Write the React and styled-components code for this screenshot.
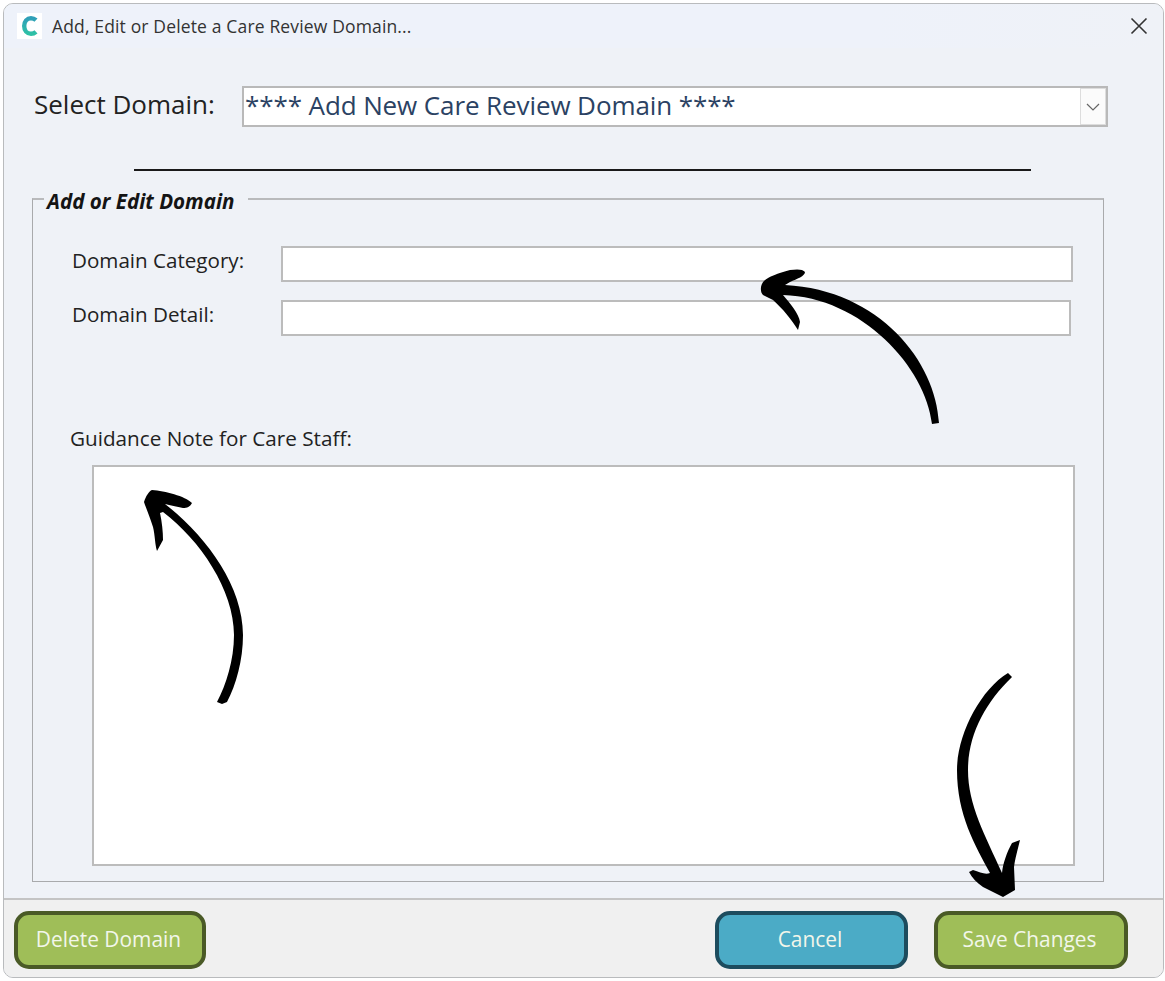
import React from 'react'
import styled, { createGlobalStyle } from 'styled-components'

const GlobalStyle = createGlobalStyle`
  html, body {
    margin: 0;
    padding: 0;
    background: #ffffff;
    font-family: "Open Sans", "Noto Sans", sans-serif;
  }
`

const Page = styled.div`
  position: relative;
  width: 1165px;
  height: 981px;
  padding: 3px 0 0 3px;
  box-sizing: border-box;
  overflow: hidden;
`

const Window = styled.div`
  width: 1161px;
  height: 975px;
  box-sizing: border-box;
  display: flex;
  flex-direction: column;
  background: #eff2f7;
  border: 1px solid #b9bbbd;
  border-radius: 10px;
  overflow: hidden;
`

const TitleBar = styled.div`
  flex: none;
  height: 44px;
  display: flex;
  align-items: center;
  padding: 0 14px 0 13px;
  color: #333;
  font-size: 17.5px;
  background: linear-gradient(90deg, #eef2fa 0%, #eef2fa 75%, #eff2f7 100%);
`

const AppIcon = styled.div`
  width: 25px;
  height: 26px;
  margin-right: 10px;
  background: #ffffff;
  display: flex;
  align-items: center;
  justify-content: center;
`

const TitleText = styled.span`
  flex: 1;
  letter-spacing: 0.15px;
  line-height: 26px;
`

const CloseButton = styled.button`
  border: 0;
  padding: 0;
  background: none;
  width: 20px;
  height: 20px;
  display: flex;
`

const Content = styled.div`
  flex: 1;
  display: flex;
  flex-direction: column;
  padding: 38px 50px 0 28px;
`

const SelectRow = styled.div`
  display: flex;
  align-items: center;
  height: 41px;
`

const SelectLabel = styled.label`
  flex: none;
  width: 210px;
  padding: 0 0 5px 2px;
  box-sizing: border-box;
  font-size: 26px;
  color: #222;
`

const SelectBox = styled.div`
  flex: none;
  width: 866px;
  height: 41px;
  box-sizing: border-box;
  display: flex;
  justify-content: space-between;
  background: #ffffff;
  border: 2px solid #b9b9b9;
  color: #2b4263;
  font-size: 26px;
  line-height: 34px;
  padding-left: 1px;
  white-space: nowrap;
  letter-spacing: -0.1px;
`

const SelectArrow = styled.div`
  width: 26px;
  box-sizing: border-box;
  background: #fbfbfb;
  border: 1px solid #dddddd;
  display: flex;
  align-items: center;
  justify-content: center;
`

const Divider = styled.hr`
  width: 897px;
  height: 2px;
  margin: 42px 0 0 102px;
  border: 0;
  background: #1a1a1a;
`

const Group = styled.fieldset`
  margin: 15px 0 0 0;
  padding: 34px 0 0 0;
  width: 1072px;
  height: 696px;
  box-sizing: border-box;
  border: 1px solid #a9aaac;
  border-top: 2px solid #b9babc;
  min-width: 0;
`

const GroupTitle = styled.legend`
  margin-left: 11px;
  padding: 4px 13px 0 3px;
  font-size: 20.6px;
  line-height: 22px;
  font-weight: 700;
  font-style: italic;
  color: #141414;
`

const FieldRow = styled.div`
  display: flex;
  align-items: center;
  height: 36px;
  margin-bottom: 18px;
  padding-left: 39px;
`

const FieldLabel = styled.label`
  width: 209px;
  font-size: 20.6px;
  line-height: 28px;
  margin-top: -8px;
  color: #222;
`

const TextInput = styled.input`
  width: ${(p) => p.$width}px;
  height: 36px;
  box-sizing: border-box;
  background: #ffffff;
  border: 2px solid #bcbcbc;
  outline: none;
`

const NoteLabel = styled.label`
  display: block;
  margin: 89px 0 0 37px;
  font-size: 20.7px;
  line-height: 26px;
  color: #222;
`

const NoteArea = styled.textarea`
  display: block;
  width: 983px;
  height: 401px;
  margin: 14px 0 0 59px;
  box-sizing: border-box;
  background: #ffffff;
  border: 2px solid #bcbcbc;
  outline: none;
  resize: none;
`

const Footer = styled.div`
  flex: none;
  height: 79px;
  box-sizing: border-box;
  display: flex;
  align-items: flex-start;
  padding: 11px 35px 0 10px;
  background: #f0f0f0;
  border-top: 2px solid #c4c4c4;
`

const ActionButton = styled.button`
  width: ${(p) => p.$width}px;
  height: 58px;
  margin-left: ${(p) => p.$gap || 0}px;
  box-sizing: border-box;
  border-radius: 15px;
  border: 4px solid ${(p) => (p.$tone === 'blue' ? '#1d4c5e' : '#4a5a26')};
  background: ${(p) => (p.$tone === 'blue' ? '#4babc6' : '#9fbe58')};
  color: #f2f6ea;
  font-family: inherit;
  font-size: 20.9px;
  padding: 0 3px 2px 0;
`

const Spacer = styled.div`
  flex: 1;
`

const Arrows = styled.svg`
  position: absolute;
  top: 0;
  left: 0;
  pointer-events: none;
`

function AppLogo() {
  return (
    <svg width="20" height="22" viewBox="0 0 20 22">
      <defs>
        <linearGradient id="logoFill" x1="0" y1="0" x2="0" y2="1">
          <stop offset="0" stopColor="#2f9fb8" />
          <stop offset="1" stopColor="#2fc0a6" />
        </linearGradient>
      </defs>
      <path
        d="M16 5.2C14.5 3.8 12.8 3.2 11 3.2C7 3.2 4.2 6.5 4.2 11C4.2 15.5 7 18.8 11 18.8C12.8 18.8 14.5 18.2 16 16.8"
        fill="none"
        stroke="url(#logoFill)"
        strokeWidth="4.4"
      />
    </svg>
  )
}

function App() {
  return (
    <Page>
      <GlobalStyle />
      <Window>
        <TitleBar>
          <AppIcon>
            <AppLogo />
          </AppIcon>
          <TitleText>Add, Edit or Delete a Care Review Domain...</TitleText>
          <CloseButton aria-label="Close">
            <svg width="20" height="20" viewBox="0 0 20 20">
              <path d="M2.5 2.5L17.5 17.5M17.5 2.5L2.5 17.5" stroke="#333" strokeWidth="1.6" fill="none" />
            </svg>
          </CloseButton>
        </TitleBar>

        <Content>
          <SelectRow>
            <SelectLabel>Select Domain:</SelectLabel>
            <SelectBox>
              <span>**** Add New Care Review Domain ****</span>
              <SelectArrow>
                <svg width="14" height="8" viewBox="0 0 14 8">
                  <path d="M1 1L7 7L13 1" stroke="#666" strokeWidth="1.2" fill="none" />
                </svg>
              </SelectArrow>
            </SelectBox>
          </SelectRow>

          <Divider />

          <Group>
            <GroupTitle>Add or Edit Domain</GroupTitle>
            <FieldRow>
              <FieldLabel>Domain Category:</FieldLabel>
              <TextInput $width={792} />
            </FieldRow>
            <FieldRow>
              <FieldLabel>Domain Detail:</FieldLabel>
              <TextInput $width={790} />
            </FieldRow>
            <NoteLabel>Guidance Note for Care Staff:</NoteLabel>
            <NoteArea />
          </Group>
        </Content>

        <Footer>
          <ActionButton $tone="green" $width={192}>Delete Domain</ActionButton>
          <Spacer />
          <ActionButton $tone="blue" $width={193}>Cancel</ActionButton>
          <ActionButton $tone="green" $width={194} $gap={26}>Save Changes</ActionButton>
        </Footer>
      </Window>

      <Arrows width="1165" height="981" viewBox="0 0 1165 981">
        <path d="M932 424L939 423C936 362 880 290 785 285L790 282C797 279 805 276 805 272C803 269 797 269 790 270C778 273 768 277 764 281C760 285 760 292 763 295L773 300C782 308 792 320 798 330L800 322C799 314 790 303 783 295C862 297 926 368 932 424Z" fill="#000" />
        <path d="M144 502C146 496 149 491 152 490C165 491 185 496 192 503C190 507 187 508 183 508C177 507 170 505 165 504C205 535 243 585 243 635C243 660 236 685 227 702L222 704L217 702C226 685 234 660 234 635C234 590 200 540 163 512L160 513C162 522 163 532 163 540L157 551C155 545 155 535 153 527C150 518 147 510 145 505Z" fill="#000" />
        <path d="M1008 673L1012 677C985 703 968 735 968 770C968 805 985 835 1002 873C1003 863 1007 852 1012 843L1020 840C1018 849 1015 858 1014 867L1015 890L1003 897L983 887C977 883 972 878 969 872L973 870C980 872 985 875 990 873C975 845 957 815 957 770C957 735 980 690 1008 673Z" fill="#000" />
      </Arrows>
    </Page>
  )
}

export default App
